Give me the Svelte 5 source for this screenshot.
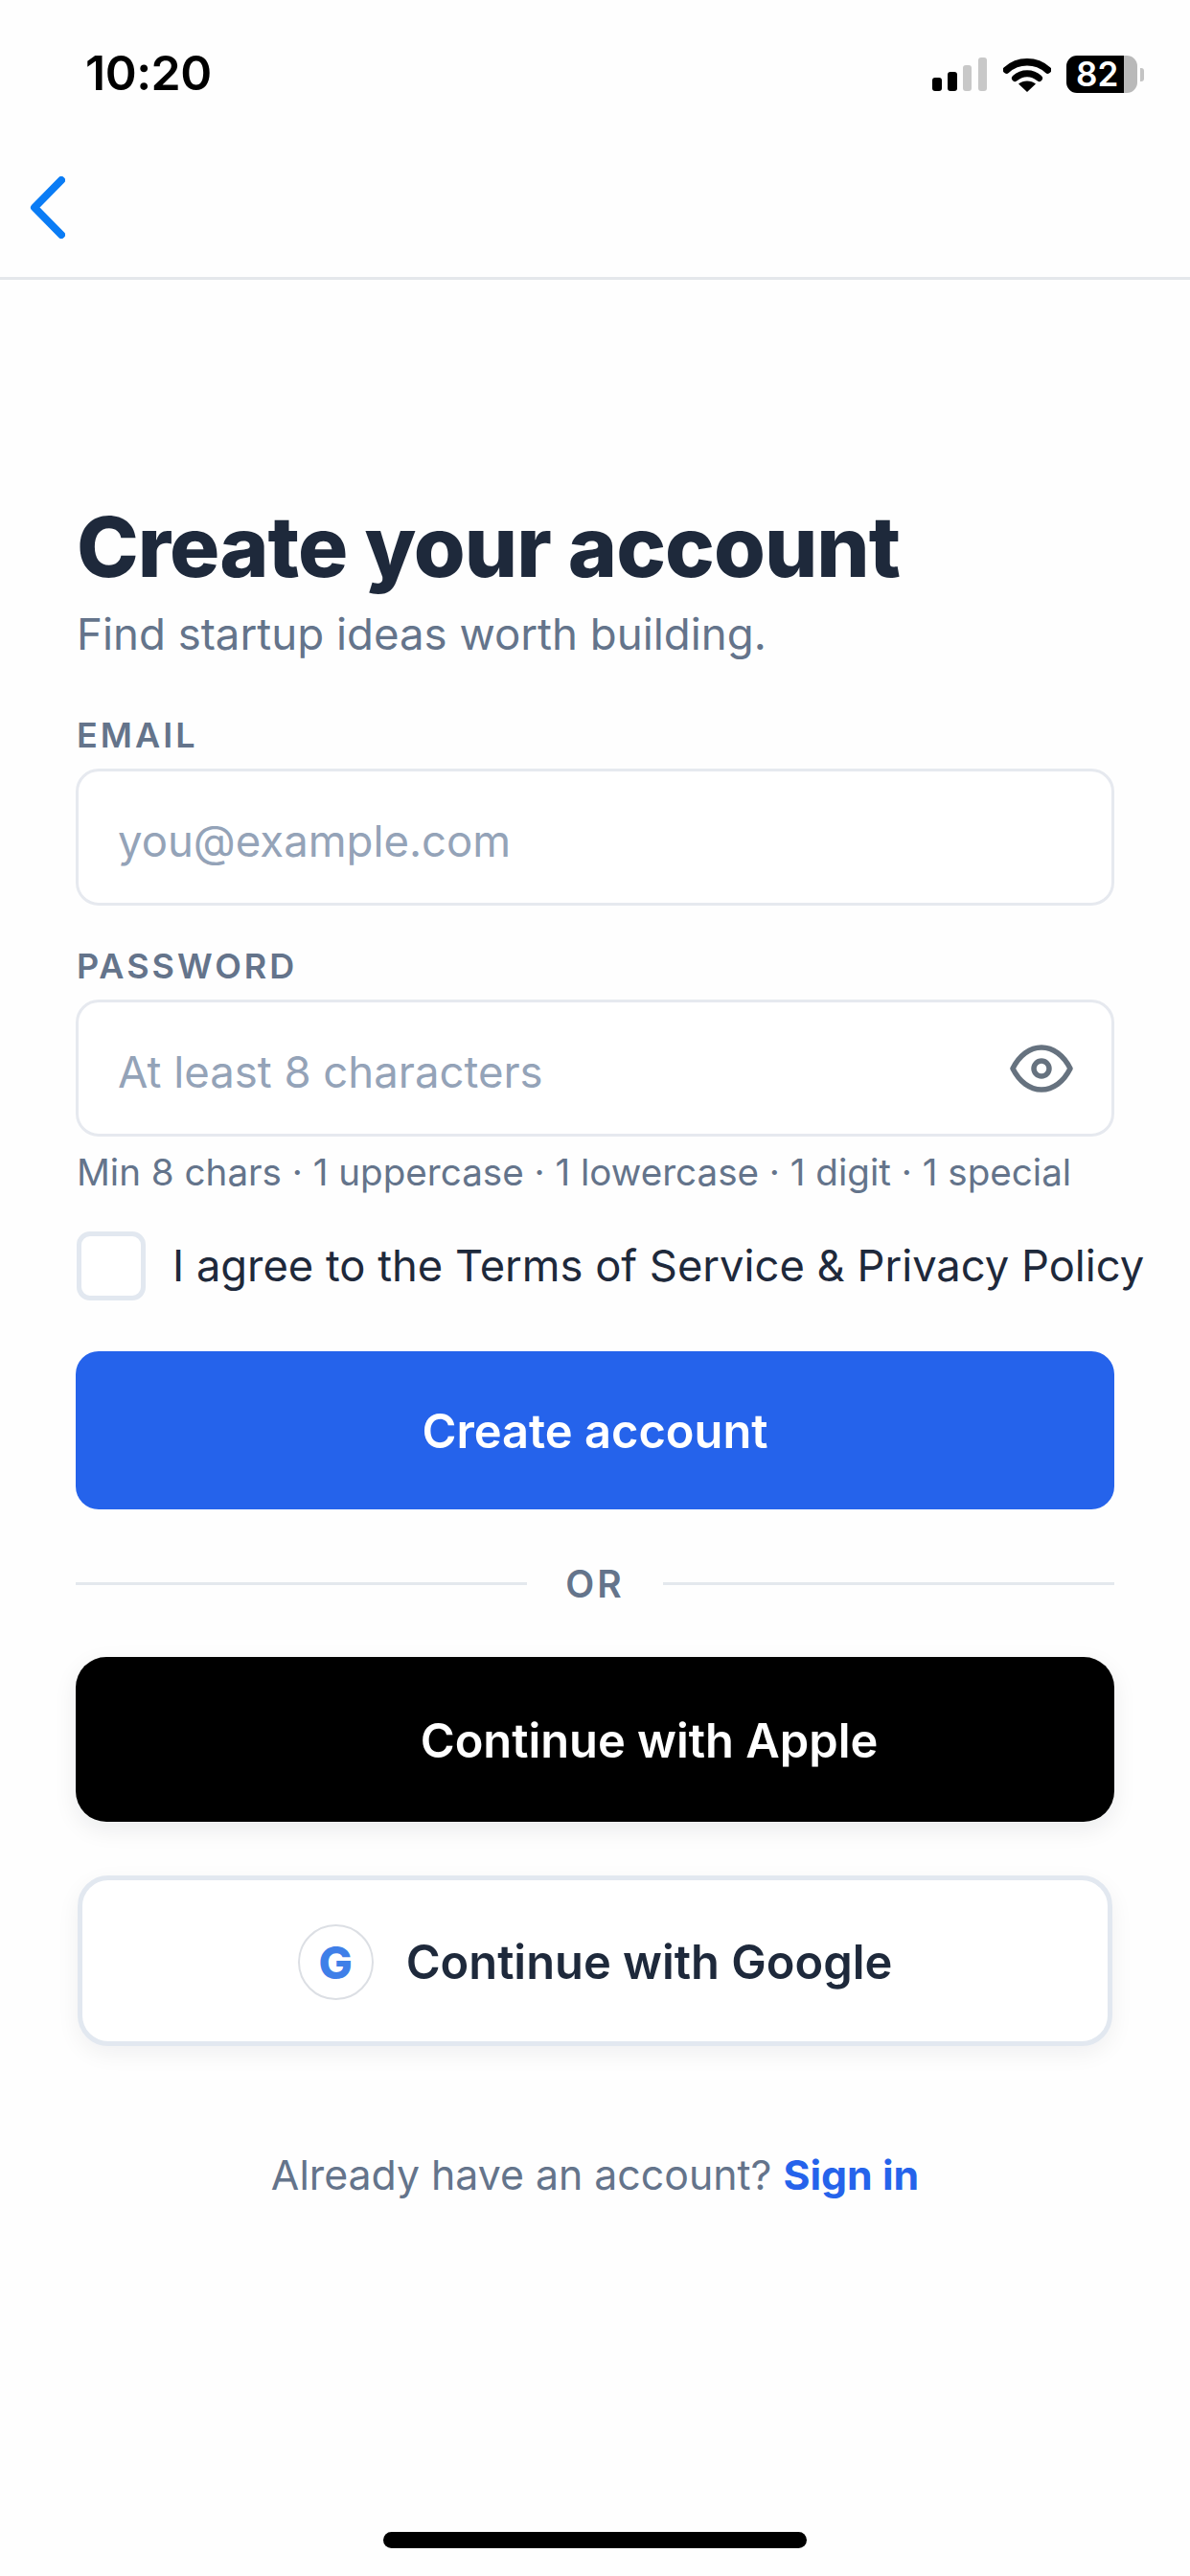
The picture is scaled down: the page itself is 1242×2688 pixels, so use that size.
<script>
  let email = $state("");
  let password = $state("");
  let agreed = $state(false);
</script>

<div class="screen">
  <div class="status">
    <span class="time">10:20</span>
    <div class="status-icons">
      <svg class="signal" viewBox="0 0 57 36" aria-hidden="true">
        <rect x="0" y="21" width="10" height="14" rx="3" fill="#000" />
        <rect x="16" y="15" width="10" height="20" rx="3" fill="#000" />
        <rect x="32" y="8" width="9" height="27" rx="3" fill="#c8c8c8" />
        <rect x="48" y="0" width="9" height="35" rx="3" fill="#c8c8c8" />
      </svg>
      <svg class="wifi" viewBox="0 0 50 36" aria-hidden="true">
        <path d="M3.5 13C15.5 2 34.5 2 46.5 13" fill="none" stroke="#000" stroke-width="7.5" stroke-linecap="round" />
        <path d="M12.5 21.5C19.5 15 30.5 15 37.5 21.5" fill="none" stroke="#000" stroke-width="7" stroke-linecap="round" />
        <path d="M25 36L16 27.5C21 23.5 29 23.5 34 27.5Z" fill="#000" />
      </svg>
      <div class="battery">82</div>
      <span class="nub"></span>
    </div>
  </div>

  <nav class="nav">
    <button class="back" type="button" aria-label="Back">
      <svg viewBox="0 0 37 65" fill="none" stroke="#0a7cf5" stroke-width="8" stroke-linecap="round" stroke-linejoin="round" aria-hidden="true">
        <path d="M33 4L5 32.5L33 61" />
      </svg>
    </button>
  </nav>

  <main class="form">
    <h1>Create your account</h1>
    <p class="sub">Find startup ideas worth building.</p>

    <label class="label" for="email">EMAIL</label>
    <div class="field">
      <input id="email" type="email" placeholder="you@example.com" bind:value={email} />
    </div>

    <label class="label pw" for="password">PASSWORD</label>
    <div class="field">
      <input id="password" type="password" placeholder="At least 8 characters" bind:value={password} />
      <svg class="eye" viewBox="0 0 66 50" fill="none" stroke="#66727f" stroke-width="5.5" stroke-linejoin="round" aria-hidden="true">
        <path d="M3 25C10 11 21 3 33 3s23 8 30 22C56 39 45 47 33 47S10 39 3 25Z" />
        <circle cx="33" cy="25" r="8" />
      </svg>
    </div>
    <p class="hint">Min 8 chars · 1 uppercase · 1 lowercase · 1 digit · 1 special</p>

    <label class="agree">
      <input class="check" type="checkbox" bind:checked={agreed} />
      <span>I agree to the Terms of Service &amp; Privacy Policy</span>
    </label>

    <button class="btn primary" type="button">Create account</button>

    <div class="or"><span>OR</span></div>

    <button class="btn apple" type="button">
      <!-- the logo slot is black on black in the app, so it only takes up room -->
      <span class="slot"></span>
      Continue with Apple
    </button>
    <button class="btn google" type="button">
      <span class="slot g">G</span>
      Continue with Google
    </button>

    <p class="signin">Already have an account? <a href="#signin">Sign in</a></p>
  </main>

  <div class="home"></div>
</div>

<style>
  :global(body) {
    margin: 0;
    background: #fff;
  }

  .screen {
    width: 1242px;
    height: 2688px;
    display: flex;
    flex-direction: column;
    background: #fefefe;
    font-family: Inter, "Liberation Sans", sans-serif;
    color: #1e293b;
    overflow: hidden;
  }

  .status {
    height: 150px;
    box-sizing: border-box;
    display: flex;
    justify-content: space-between;
    align-items: flex-start;
    padding: 52px 48px 0 89px;
  }

  .time {
    font-size: 50px;
    line-height: 48px;
    font-weight: 600;
    color: #000;
    letter-spacing: -0.5px;
  }

  .status-icons {
    display: flex;
    align-items: center;
    padding-top: 6px;
  }

  .signal {
    width: 57px;
    height: 36px;
    margin-right: 17px;
  }

  .wifi {
    width: 50px;
    height: 36px;
    margin-right: 16px;
  }

  .battery {
    width: 74px;
    height: 39px;
    border-radius: 11px;
    background: linear-gradient(90deg, #000 81%, #b9b9b9 81%);
    color: #fff;
    font-size: 35px;
    line-height: 39px;
    font-weight: 600;
    text-indent: 10px;
  }

  .nub {
    width: 4px;
    height: 14px;
    margin-left: 3px;
    border-radius: 0 3px 3px 0;
    background: #c4c4c4;
  }

  .nav {
    height: 142px;
    box-sizing: border-box;
    padding: 34px 0 0 31px;
    border-bottom: 3px solid #e4e7eb;
  }

  .back {
    display: block;
    padding: 0;
    border: 0;
    background: none;
    width: 37px;
    height: 65px;
  }

  .back svg {
    display: block;
    width: 37px;
    height: 65px;
  }

  .form {
    display: flex;
    flex-direction: column;
    padding: 229px 80px 0;
  }

  h1 {
    margin: 0;
    font-size: 87.2px;
    line-height: 100px;
    font-weight: 800;
    letter-spacing: -1px;
    color: #1e293b;
    white-space: nowrap;
  }

  .sub {
    margin: 14px 0 0;
    font-size: 45.6px;
    line-height: 54px;
    color: #64748b;
    white-space: nowrap;
  }

  .label {
    margin-top: 57px;
    font-size: 36px;
    line-height: 42px;
    font-weight: 600;
    letter-spacing: 3px;
    color: #64748b;
  }

  .label.pw {
    margin-top: 42px;
  }

  .field {
    position: relative;
    height: 143px;
    margin: 14px -1px 0;
    box-sizing: border-box;
    border: 3px solid #e6e9ef;
    border-radius: 24px;
    background: #fff;
    display: flex;
    align-items: center;
  }

  input:not(.check) {
    flex: 1;
    min-width: 0;
    height: 100%;
    box-sizing: border-box;
    padding: 8px 41px 0;
    border: 0;
    outline: 0;
    background: transparent;
    font: inherit;
    font-size: 45.5px;
    color: #1e293b;
  }

  input::placeholder {
    color: #94a3b8;
    opacity: 1;
  }

  .eye {
    flex: none;
    width: 66px;
    height: 50px;
    margin-right: 40px;
  }

  .hint {
    margin: 15px 0 0;
    font-size: 38.6px;
    line-height: 44px;
    color: #64748b;
    white-space: nowrap;
  }

  .agree {
    display: flex;
    align-items: center;
    gap: 28px;
    margin-top: 40px;
    font-size: 45.3px;
    line-height: 72px;
    color: #1e293b;
    white-space: nowrap;
  }

  .check {
    appearance: none;
    flex: none;
    width: 72px;
    height: 72px;
    margin: 0;
    box-sizing: border-box;
    border: 5px solid #e2e8f0;
    border-radius: 14px;
    background: #fff;
  }

  .btn {
    display: flex;
    align-items: center;
    justify-content: center;
    border: 0;
    padding: 2px 0 0;
    font: inherit;
    font-size: 48.8px;
    font-weight: 600;
  }

  .primary {
    height: 165px;
    margin: 53px -1px 0;
    border-radius: 24px;
    background: #2563eb;
    color: #fff;
  }

  .or {
    display: flex;
    align-items: center;
    gap: 40px;
    margin: 55px -1px 0;
    height: 44px;
    font-size: 39px;
    font-weight: 600;
    letter-spacing: 3px;
    color: #64748b;
  }

  .or::before,
  .or::after {
    content: "";
    flex: 1;
    height: 3px;
    background: #e4e8ed;
  }

  .apple {
    height: 172px;
    gap: 34px;
    margin: 55px -1px 0;
    border-radius: 32px;
    background: #000;
    color: #fff;
    box-shadow: 0 8px 24px rgba(15, 23, 42, 0.08);
  }

  .google {
    height: 178px;
    margin: 56px 1px 0;
    gap: 34px;
    box-sizing: border-box;
    border: 5px solid #e2e8f0;
    border-radius: 32px;
    background: #fff;
    color: #1e293b;
    box-shadow: 0 8px 24px rgba(15, 23, 42, 0.06);
  }

  .slot {
    flex: none;
    width: 79px;
    height: 79px;
  }

  .g {
    box-sizing: border-box;
    display: flex;
    align-items: center;
    justify-content: center;
    border: 2px solid #dcdfe4;
    border-radius: 50%;
    color: #3f7fe8;
    font-size: 47px;
    font-weight: 800;
  }

  .signin {
    margin: 109px 0 0;
    text-align: center;
    font-size: 42.8px;
    line-height: 52px;
    color: #64748b;
  }

  .signin a {
    color: #2563eb;
    font-weight: 700;
    text-decoration: none;
  }

  .home {
    width: 442px;
    height: 17px;
    margin: auto auto 29px;
    border-radius: 9px;
    background: #000;
  }
</style>
